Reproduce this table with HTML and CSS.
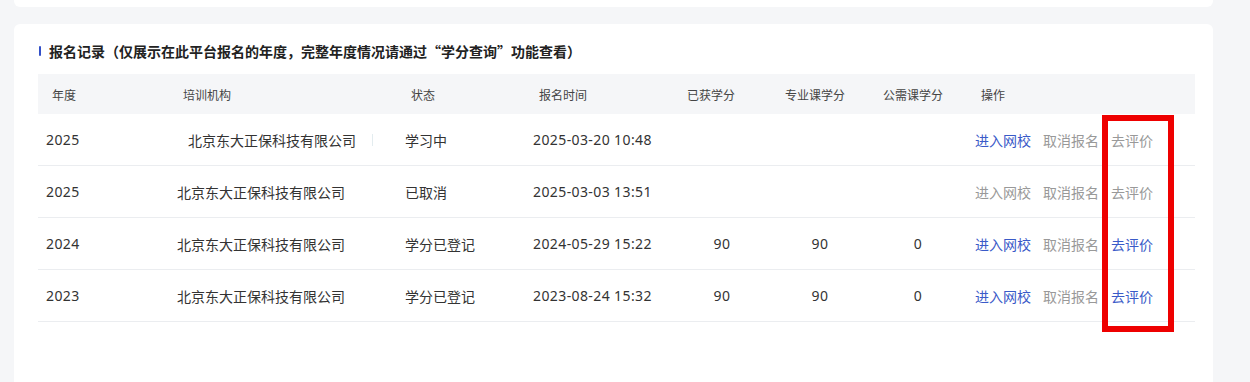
FILE: index.html
```html
<!DOCTYPE html>
<html lang="zh-CN">
<head>
<meta charset="utf-8">
<title>报名记录</title>
<link rel="stylesheet" href="styles.css">
</head>
<body>
<div class="page">
  <div class="top-card"></div>
  <div class="card">
    <div class="title"><span class="bar"></span>报名记录（仅展示在此平台报名的年度，完整年度情况请通过“学分查询”功能查看）</div>
    <div class="table">
      <div class="row head">
        <div class="cell">年度</div>
        <div class="cell">培训机构</div>
        <div class="cell">状态</div>
        <div class="cell">报名时间</div>
        <div class="cell">已获学分</div>
        <div class="cell">专业课学分</div>
        <div class="cell">公需课学分</div>
        <div class="cell">操作</div>
      </div>
      <div class="row">
        <div class="cell num">2025</div>
        <div class="cell org org-shift"><span class="org-text">北京东大正保科技有限公司</span><span class="caret"></span></div>
        <div class="cell">学习中</div>
        <div class="cell num">2025-03-20 10:48</div>
        <div class="cell num center"></div>
        <div class="cell num center"></div>
        <div class="cell num center"></div>
        <div class="cell actions"><span class="link">进入网校</span><span class="muted">取消报名</span><span class="muted">去评价</span></div>
      </div>
      <div class="row">
        <div class="cell num">2025</div>
        <div class="cell org">北京东大正保科技有限公司</div>
        <div class="cell">已取消</div>
        <div class="cell num">2025-03-03 13:51</div>
        <div class="cell num center"></div>
        <div class="cell num center"></div>
        <div class="cell num center"></div>
        <div class="cell actions"><span class="muted">进入网校</span><span class="muted">取消报名</span><span class="muted">去评价</span></div>
      </div>
      <div class="row">
        <div class="cell num">2024</div>
        <div class="cell org">北京东大正保科技有限公司</div>
        <div class="cell">学分已登记</div>
        <div class="cell num">2024-05-29 15:22</div>
        <div class="cell num center">90</div>
        <div class="cell num center">90</div>
        <div class="cell num center">0</div>
        <div class="cell actions"><span class="link">进入网校</span><span class="muted">取消报名</span><span class="link">去评价</span></div>
      </div>
      <div class="row">
        <div class="cell num">2023</div>
        <div class="cell org">北京东大正保科技有限公司</div>
        <div class="cell">学分已登记</div>
        <div class="cell num">2023-08-24 15:32</div>
        <div class="cell num center">90</div>
        <div class="cell num center">90</div>
        <div class="cell num center">0</div>
        <div class="cell actions"><span class="link">进入网校</span><span class="muted">取消报名</span><span class="link">去评价</span></div>
      </div>
    </div>
  </div>
  <div class="highlight"></div>
</div>
</body>
</html>
```

FILE: styles.css
```css
html, body {
  margin: 0;
  padding: 0;
}
body {
  background: #f5f6f8;
  font-family: "Noto Sans", "Noto Sans CJK SC", sans-serif;
  color: #333;
  width: 1250px;
  height: 382px;
  overflow: hidden;
}
.page {
  position: relative;
  padding: 0 37px 0 14px;
  display: flex;
  flex-direction: column;
  gap: 17px;
}
.top-card {
  height: 7px;
  background: #fff;
  border-radius: 0 0 6px 6px;
}
.card {
  background: #fff;
  border-radius: 6px 6px 0 0;
  padding: 17px 18px 0 24px;
  height: 358px;
  box-sizing: border-box;
}
.title {
  display: flex;
  align-items: center;
  font-family: "Noto Sans CJK SC", sans-serif;
  font-size: 14px;
  font-weight: 700;
  color: #222;
  height: 20px;
  margin-bottom: 13px;
}
.bar {
  width: 2px;
  height: 10px;
  background: #3350c8;
  margin: 0 8px 0 1px;
  border-radius: 1px;
}
.row {
  display: grid;
  grid-template-columns: 131px 228px 128px 148px 98px 98px 98px 228px;
  height: 52px;
  align-items: center;
  border-bottom: 1px solid #ebedf0;
  box-sizing: border-box;
  font-size: 14px;
}
.row.head {
  height: 40px;
  background: #f5f6f8;
  border-bottom: none;
  font-size: 12px;
  color: #444;
}
.cell {
  padding-left: 8px;
  font-family: "Noto Sans CJK SC", sans-serif;
  white-space: nowrap;
}
.head .cell {
  padding-left: 14px;
}
.num {
  font-family: "Noto Sans", sans-serif;
  color: #333;
  letter-spacing: 0.4px;
}
.center {
  padding-left: 0;
  text-align: center;
}
.org {
  font-size: 14px;
}
.org-shift {
  padding-left: 19px;
  display: flex;
  align-items: center;
}
.caret {
  width: 1px;
  height: 12px;
  background: #e3ecef;
  margin-left: 16px;
}
.actions {
  display: flex;
  gap: 12px;
}
.link {
  color: #3a5ac8;
}
.muted {
  color: #999;
}
.highlight {
  position: absolute;
  left: 1102px;
  top: 115px;
  width: 72px;
  height: 217px;
  box-sizing: border-box;
  border: 6px solid #ee0000;
}
```
